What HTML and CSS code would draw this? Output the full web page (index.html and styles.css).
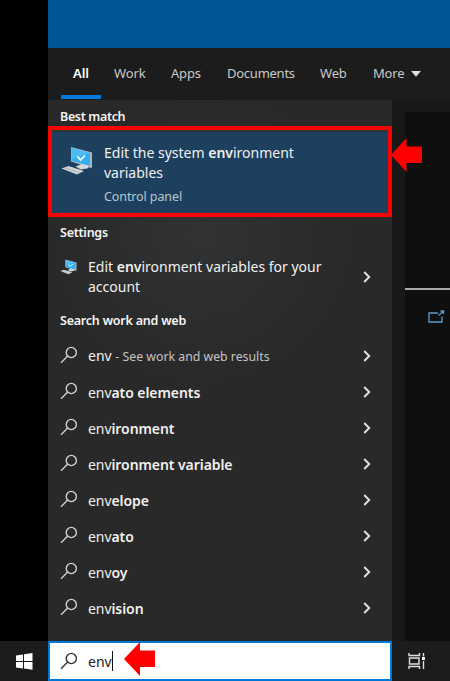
FILE: index.html
```
<!DOCTYPE html>
<html lang="en">
<head>
<meta charset="utf-8">
<title>Search</title>
<link rel="stylesheet" href="styles.css">
</head>
<body>
<svg class="defs" width="0" height="0">
  <symbol id="search" viewBox="0 0 18 18"><circle cx="11.3" cy="6.5" r="5.1"/><path d="M7.7 10.1 1 16.8"/></symbol>
  <symbol id="chevron" viewBox="0 0 8 12"><path d="M1.2 1 6.2 6 1.2 11"/></symbol>
  <symbol id="computer" viewBox="0 0 32 30">
    <path d="M10 1 31 6.5V22L28.500 21.500 10 15.500z" fill="#a9bac5"/>
    <path d="M10.700 2 29 7V20L10.700 14.800z" fill="#35aef0"/>
    <path d="M10.700 2 29 7 11 13z" fill="#50baf5"/>
    <path d="m16.500 10.500 3 3.500 4.500-4.500" fill="none" stroke="#fff" stroke-width="1.700"/>
    <path d="m14.500 20.500 6.500-2.500 7 2-1 2.200-7 1.300z" fill="#d2d8dc"/>
    <path d="M.5 22.500 7.500 20 23 25l-7 3.500z" fill="#d0d3d5"/>
    <path d="m4 22 14 4.500" fill="none" stroke="#a1a9af" stroke-width=".7"/>
  </symbol>
</svg>
<div class="screen">
  <div class="desktop">
    <div class="gutter"></div>
    <div class="flyout">
      <div class="titlebar"></div>
      <nav class="tabs">
        <span class="tab active">All</span>
        <span class="tab work">Work</span>
        <span class="tab apps">Apps</span>
        <span class="tab docs">Documents</span>
        <span class="tab web">Web</span>
        <span class="tab more">More</span>
        <svg class="caret" width="10" height="6" viewBox="0 0 10 6"><path d="M0 0H10L5 5.700z"/></svg>
      </nav>
      <div class="content">
        <main class="results">
          <h2 class="best">Best match</h2>
          <div class="match">
            <svg class="pc" width="32" height="30"><use href="#computer"/></svg>
            <div>
              <p class="m1">Edit the system <b>env</b>ironment</p>
              <p class="m2">variables</p>
              <p class="sub">Control panel</p>
            </div>
            <svg class="arrow match-arrow" width="31" height="34" viewBox="0 0 31 34"><path d="M0 17 15.500 0V8.500H31V25H15.500V34z"/></svg>
          </div>
          <h2 class="settings">Settings</h2>
          <div class="setting">
            <svg class="small-pc" width="17" height="16"><use href="#computer"/></svg>
            <div class="grow"><p class="s1">Edit <b>env</b>ironment variables for your</p><p class="s2">account</p></div>
            <svg class="chevron"><use href="#chevron"/></svg>
          </div>
          <h2 class="web-heading">Search work and web</h2>
          <div class="row"><svg class="search"><use href="#search"/></svg><p class="first">env <span class="hint">- See work and web results</span></p><svg class="chevron"><use href="#chevron"/></svg></div>
          <div class="row"><svg class="search"><use href="#search"/></svg><p>env<b>ato elements</b></p><svg class="chevron"><use href="#chevron"/></svg></div>
          <div class="row"><svg class="search"><use href="#search"/></svg><p>env<b>ironment</b></p><svg class="chevron"><use href="#chevron"/></svg></div>
          <div class="row"><svg class="search"><use href="#search"/></svg><p>env<b>ironment variable</b></p><svg class="chevron"><use href="#chevron"/></svg></div>
          <div class="row"><svg class="search"><use href="#search"/></svg><p>env<b>elope</b></p><svg class="chevron"><use href="#chevron"/></svg></div>
          <div class="row"><svg class="search"><use href="#search"/></svg><p>env<b>ato</b></p><svg class="chevron"><use href="#chevron"/></svg></div>
          <div class="row"><svg class="search"><use href="#search"/></svg><p>env<b>oy</b></p><svg class="chevron"><use href="#chevron"/></svg></div>
          <div class="row"><svg class="search"><use href="#search"/></svg><p>env<b>ision</b></p><svg class="chevron"><use href="#chevron"/></svg></div>
        </main>
        <aside class="side">
          <div class="details">
            <div class="divider"></div>
            <svg class="open" width="17" height="14" viewBox="0 0 17 14"><path d="M10 3H1V12H14V6.500M10.500 5.500 15 1.500M12.500 1H15.500V4" /></svg>
          </div>
        </aside>
      </div>
    </div>
  </div>
  <footer class="taskbar">
    <div class="start"><svg width="17" height="17" viewBox="0 0 17 17"><path d="M0 2.500 7 1.500V8H0zM8 1.300 16.500 0V8H8zM0 9H7V15.500L0 14.500zM8 9H16.500V16.700L8 15.600z"/></svg></div>
    <div class="input">
      <svg class="search"><use href="#search"/></svg><span class="query">env</span><span class="cursor"></span>
      <svg class="arrow input-arrow" width="31" height="34" viewBox="0 0 31 34"><path d="M0 17 16 0V8.500H31V25H16V34z"/></svg>
    </div>
    <div class="taskview"><svg width="18" height="16" viewBox="0 0 18 16"><path d="M1 0V2.500H11.500V0M1 16V13.500H11.500V16M1.500 5H11V11H1.500zM15.500 0V3.500M15.500 8V16"/><path class="dot" d="M14 4h3v3h-3z"/></svg></div>
  </footer>
</div>
</body>
</html>
```

FILE: styles.css
```
* { box-sizing: border-box; }
body { margin: 0; background: #000; font-family: "Noto Sans", "Open Sans", sans-serif; color: #f0f0f0; }
p, h2 { margin: 0; white-space: nowrap; }
svg { display: block; flex: none; }
.defs { position: absolute; }
b { font-weight: 600; }
.screen { width: 450px; height: 681px; display: flex; flex-direction: column; overflow: hidden; }
.desktop { height: 641px; display: flex; }
.gutter { width: 48px; background: #000; }
.flyout { width: 402px; display: flex; flex-direction: column; }
.titlebar { height: 48px; background: #005695; }
.tabs { height: 52px; background: #1d1c1c; display: flex; padding-left: 13px; font-size: 13px; line-height: 51px; color: #c8c8c8; }
.tab { white-space: nowrap; flex: none; }
.active { width: 40px; margin-right: 13px; text-align: center; color: #fff; font-weight: 600; border-bottom: 4px solid #0078d7; height: 51px; }
.work { width: 57px; letter-spacing: -.1px; }
.apps { width: 56px; letter-spacing: -.2px; }
.docs { width: 93px; letter-spacing: -.25px; }
.web { width: 53px; letter-spacing: -.2px; }
.more { width: 38px; letter-spacing: -.2px; }
.caret { margin-top: 23px; fill: #e0e0e0; }
.content { height: 541px; display: flex; }
.results { width: 344px; background: radial-gradient(circle at 155px 135px, #303234 0, #292929 145px); display: flex; flex-direction: column; }
h2 { padding-left: 12px; font-size: 12.5px; font-weight: 600; letter-spacing: -.22px; color: #f4f4f4; }
.best { height: 26px; line-height: 33px; letter-spacing: -.35px; }
.match { height: 91px; position: relative; border: 4px solid #f00; background: linear-gradient(#29333a 0 2px, #1d405e 2px); display: flex; font-size: 14px; line-height: 20px; padding-top: 13px; }
.pc { width: 32px; margin: 3px 11px 0 9px; }
.m1, .m2 { height: 20px; }
.sub { color: #bac5ce; font-size: 12.5px; line-height: 28px; letter-spacing: -.1px; }
.arrow { position: absolute; fill: #f00; }
.match-arrow { left: 339px; top: 8px; z-index: 2; }
.settings { height: 40px; line-height: 32px; letter-spacing: -.25px; }
.setting { height: 40px; display: flex; align-items: center; font-size: 14px; line-height: 20px; padding: 0 21px 0 12px; }
.small-pc { margin: -20px 11px 0 0; }
.small-pc + .grow { flex: 1; }
.web-heading { height: 41px; line-height: 47px; }
.row { height: 36px; display: flex; align-items: center; padding: 0 21px 0 12px; font-size: 14px; }
.row p { flex: 1; margin-left: 10px; letter-spacing: -.07px; }
.row .first { margin-top: -2px; letter-spacing: 0; }
.hint { font-size: 12.3px; color: #c4c4c4; }
.search { width: 18px; height: 18px; margin-top: -2px; fill: none; stroke: #d2d2d2; stroke-width: 1.4; }
.chevron { width: 8px; height: 12px; margin-top: -1px; fill: none; stroke: #dedede; stroke-width: 2; }
.side { width: 58px; background: #181818; padding: 12px 0 0 13px; }
.details { height: 529px; background: #0f0f0f; padding-top: 176px; }
.divider { height: 2px; background: #aaa; }
.open { margin: 20px 0 0 23px; fill: none; stroke: #5b9dce; stroke-width: 1.3; }
.taskbar { height: 40px; background: #1c1c1c; display: flex; }
.start { width: 48px; padding: 12px 0 0 16px; fill: #fff; }
.input { position: relative; width: 344px; background: #fff; border: 2px solid #0078d7; color: #222; display: flex; align-items: center; padding-left: 10px; font-size: 14px; }
.input .search { margin-top: 0; stroke: #333; }
.query { margin-left: 10px; }
.cursor { width: 1px; height: 20px; background: #111; }
.input-arrow { left: 74px; top: -1px; }
.taskview { padding: 12px 0 0 16px; fill: none; stroke: #ddd; stroke-width: 1.4; }
.dot { fill: #fff; stroke: none; }
```
